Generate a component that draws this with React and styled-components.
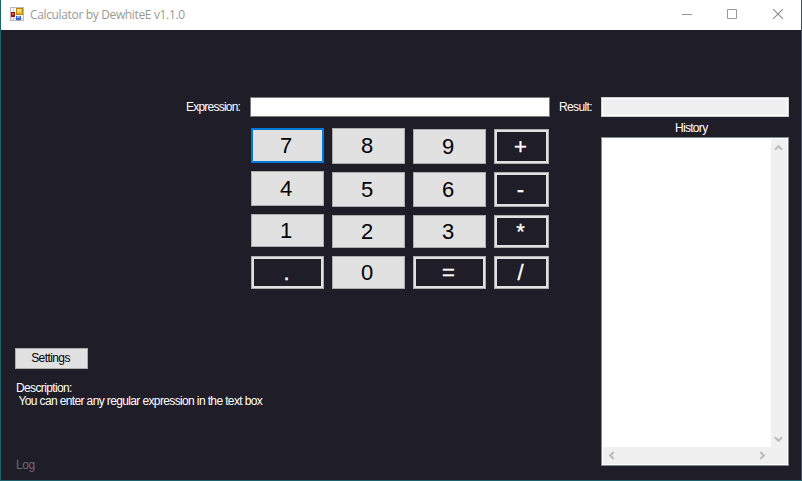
import React from "react";
import styled, { createGlobalStyle, css } from "styled-components";

const Global = createGlobalStyle`
  * { box-sizing: border-box; }
  body { margin: 0; overflow: hidden; background: #1f1d27; }
  button, input { font: inherit; margin: 0; padding: 0; border-radius: 0; outline: none; }
`;

const Window = styled.div`
  display: flex;
  flex-direction: column;
  width: 802px;
  height: 481px;
  border: solid #1f616a;
  border-width: 0 1px 1px;
  background: #1f1d27;
  color: #fff;
  font: 12px/13px "Liberation Sans", Arial, sans-serif;
`;

const TitleBar = styled.header`
  display: flex;
  align-items: center;
  height: 30px;
  flex: none;
  padding-left: 9px;
  background: #fff;
  color: #999;
  > svg { margin-bottom: 2px; }
`;

const Title = styled.h1`
  flex: 1;
  margin: 0 0 0 6px;
  font: 400 12px/16px "Open Sans", "Noto Sans", sans-serif;
  letter-spacing: -0.35px;
`;

const CaptionButton = styled.button`
  display: grid;
  place-items: center;
  width: 46px;
  height: 30px;
  border: 0;
  background: none;
  svg { display: block; margin-bottom: 2px; }
`;

const MaximizeButton = styled(CaptionButton)`
  width: 45px;
  padding-right: 2px;
`;

const Body = styled.main`
  display: flex;
  flex: 1;
  padding-top: 67px;
`;

const Left = styled.section`
  display: flex;
  flex-direction: column;
  width: 549px;
`;

const Right = styled.section`
  display: flex;
  flex-direction: column;
  width: 239px;
  padding-left: 9px;
`;

const FieldRow = styled.div`
  display: flex;
  justify-content: space-between;
  align-items: center;
  height: 20px;
  padding-left: ${(p) => p.$indent || 0}px;
`;

const Label = styled.span`
  white-space: pre;
  letter-spacing: ${(p) => p.$track || -0.63}px;
`;

const ExpressionInput = styled.input`
  width: 300px;
  height: 20px;
  border: 1px solid #7a7a7a;
  background: #fff;
`;

const ResultBox = styled.output`
  width: 188px;
  height: 20px;
  border: 1px solid #ccc;
  box-shadow: inset 0 0 0 1px #fff;
  background: #f0f0f0;
`;

const Keypad = styled.div`
  display: flex;
  gap: 8px;
  margin: 11px 0 0 250px;
`;

const KeyColumn = styled.div`
  display: flex;
  flex-direction: column;
  width: ${(p) => p.$w}px;
  padding-top: ${(p) => p.$top || 0}px;
`;

const Key = styled.button`
  width: 100%;
  height: ${(p) => p.$h}px;
  margin-bottom: ${(p) => p.$gap || 8}px;
  padding: 0 3px 0 0;
  border: 1px solid #adadad;
  background: #e1e1e1;
  color: #000;
  font-size: 22px;
  line-height: 24px;
  &:last-child { margin-bottom: 0; }
  ${(p) => p.$focused && css`
    border: 2px solid #0078d7;
  `}
  ${(p) => p.$dark && css`
    background: #1f1d27;
    color: #fff;
    padding-right: 2px;
    box-shadow: inset 0 0 0 2px #e1e1e1;
    -webkit-text-stroke: 0.3px #fff;
  `}
`;

const Settings = styled.button`
  width: 73px;
  height: 21px;
  margin: 59px 0 0 14px;
  padding-right: 2px;
  border: 1px solid #adadad;
  background: #e1e1e1;
  color: #000;
  letter-spacing: -0.6px;
`;

const Description = styled.div`
  display: flex;
  flex-direction: column;
  align-items: flex-start;
  margin: 13px 0 0 15px;
`;

const Log = styled.div`
  margin: 51px 0 0 15px;
  color: #6d6d6d;
  letter-spacing: -0.4px;
`;

const HistoryLabel = styled.div`
  display: flex;
  margin: 5px 0 2px 116px;
`;

const HistoryList = styled.div`
  display: grid;
  grid-template: 1fr 17px / 1fr 16px;
  width: 188px;
  height: 329px;
  margin-left: 42px;
  padding: 1px;
  border: 1px solid #828790;
  background: #fff;
`;

const ScrollBar = styled.div`
  display: flex;
  justify-content: space-between;
  align-items: center;
  background: #f0f0f0;
  svg { display: block; }
  ${(p) => p.$vertical
    ? css`
        grid-column: 2;
        flex-direction: column;
        padding: 5px 1px 4px 0;
      `
    : css`
        grid-column: 1 / 3;
        padding: 0 21px 1px 5px;
      `}
`;

const arrows = {
  up: [9, 7, "M1 5.7 4.5 2.2 8 5.7"],
  down: [9, 7, "M1 1.3 4.5 4.8 8 1.3"],
  left: [7, 9, "M5.7 1 2.2 4.5 5.7 8"],
  right: [7, 9, "M1.3 1 4.8 4.5 1.3 8"],
};

function Arrow({ dir }) {
  const [w, h, d] = arrows[dir];
  return (
    <svg width={w} height={h} viewBox={`0 0 ${w} ${h}`} fill="none">
      <path d={d} stroke="#bcbcbc" strokeWidth="2.1" />
    </svg>
  );
}

function FormIcon() {
  return (
    <svg width="14" height="14" viewBox="0 0 14 14" shapeRendering="crispEdges">
      <path d="M.5 .5h13v13H.5z" fill="#fff" stroke="#b9b9b9" />
      <path d="M3.5 1v12M1 11.5h12" stroke="#d2d2d2" />
      <path d="M6 1h7v7H6z" fill="#b8860b" />
      <path d="M7 2h5v5H7z" fill="#f2b92e" />
      <path d="M7 2h4v3H7z" fill="#ffdc72" />
      <path d="M1 5h4v5H1z" fill="#98190c" />
      <path d="M2 6h2v2H2z" fill="#dc5a45" />
      <path d="M6 9h5v4H6z" fill="#3565c0" />
      <path d="M7 9h3v2H7z" fill="#7eacf5" />
    </svg>
  );
}

const columns = [
  { w: 73, keys: [["7", 35, 8, false, true], ["4", 35], ["1", 33, 9], [".", 33, 8, true]] },
  { w: 73, keys: [["8", 36], ["5", 35], ["2", 33], ["0", 33]] },
  { w: 73, top: 1, keys: [["9", 35], ["6", 35], ["3", 33], ["=", 33, 8, true]] },
  { w: 55, top: 1, keys: [["+", 35, 8, true], ["-", 35, 8, true], ["*", 33, 8, true], ["/", 33, 8, true]] },
];

export default function App() {
  return (
    <>
      <Global />
      <Window>
        <TitleBar>
          <FormIcon />
          <Title>Calculator by DewhiteE v1.1.0</Title>
          <CaptionButton aria-label="Minimize">
            <svg width="10" height="10"><path d="M0 5.5h10" stroke="#999" /></svg>
          </CaptionButton>
          <MaximizeButton aria-label="Maximize">
            <svg width="10" height="10"><path d="M.5 .5h9v9h-9z" fill="none" stroke="#999" /></svg>
          </MaximizeButton>
          <CaptionButton aria-label="Close">
            <svg width="10" height="10"><path d="M0 0 10 10M10 0 0 10" stroke="#8c8c8c" strokeWidth="1.1" /></svg>
          </CaptionButton>
        </TitleBar>
        <Body>
          <Left>
            <FieldRow $indent={185}>
              <Label $track={-0.78}>Expression:</Label>
              <ExpressionInput aria-label="Expression" />
            </FieldRow>
            <Keypad>
              {columns.map((c, i) => (
                <KeyColumn key={i} $w={c.w} $top={c.top}>
                  {c.keys.map(([t, h, gap, dark, focused]) => (
                    <Key key={t} $h={h} $gap={gap} $dark={dark} $focused={focused}>{t}</Key>
                  ))}
                </KeyColumn>
              ))}
            </Keypad>
            <Settings>Settings</Settings>
            <Description>
              <Label>Description:</Label>
              <Label> You can enter any regular expression in the text box</Label>
            </Description>
            <Log>Log</Log>
          </Left>
          <Right>
            <FieldRow>
              <Label>Result:</Label>
              <ResultBox />
            </FieldRow>
            <HistoryLabel><Label $track={-0.7}>History</Label></HistoryLabel>
            <HistoryList>
              <div />
              <ScrollBar $vertical><Arrow dir="up" /><Arrow dir="down" /></ScrollBar>
              <ScrollBar><Arrow dir="left" /><Arrow dir="right" /></ScrollBar>
            </HistoryList>
          </Right>
        </Body>
      </Window>
    </>
  );
}
